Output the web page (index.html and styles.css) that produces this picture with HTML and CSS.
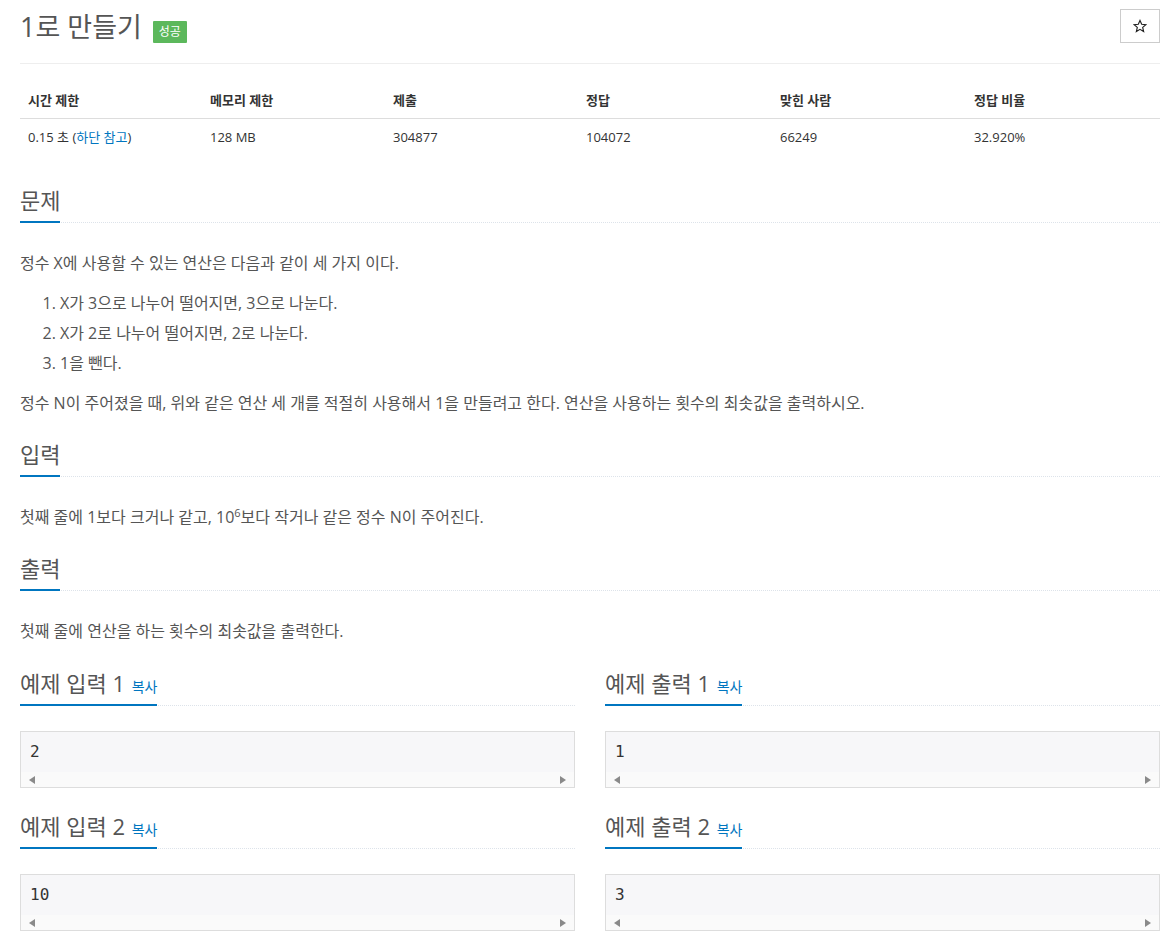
FILE: index.html
```html
<!DOCTYPE html>
<html lang="ko">
<head>
<meta charset="utf-8">
<title>1로 만들기</title>
<link rel="stylesheet" href="styles.css">
</head>
<body>
<div class="page">
  <div class="page-header">
    <h1 class="title">
      <span class="title-text">1로 만들기</span>
      <span class="badge">성공</span>
    </h1>
    <button class="star-btn" type="button" aria-label="즐겨찾기">
      <svg width="14" height="14" viewBox="0 0 24 24"><path d="M12 2.5l2.9 6.6 7.1.6-5.4 4.7 1.6 7-6.2-3.7-6.2 3.7 1.6-7L2 9.7l7.1-.6z" fill="none" stroke="#222" stroke-width="2" stroke-linejoin="miter"/></svg>
    </button>
  </div>

  <table class="info">
    <thead>
      <tr>
        <th class="c1">시간 제한</th>
        <th class="c2">메모리 제한</th>
        <th class="c3">제출</th>
        <th class="c4">정답</th>
        <th class="c5">맞힌 사람</th>
        <th class="c6">정답 비율</th>
      </tr>
    </thead>
    <tbody>
      <tr>
        <td>0.15 초 (<a class="link" href="#">하단 참고</a>)</td>
        <td>128 MB</td>
        <td>304877</td>
        <td>104072</td>
        <td>66249</td>
        <td>32.920%</td>
      </tr>
    </tbody>
  </table>

  <section class="section">
    <div class="headline"><h2>문제</h2></div>
    <div class="text">
      <p>정수 X에 사용할 수 있는 연산은 다음과 같이 세 가지 이다.</p>
      <ol>
        <li>X가 3으로 나누어 떨어지면, 3으로 나눈다.</li>
        <li>X가 2로 나누어 떨어지면, 2로 나눈다.</li>
        <li>1을 뺀다.</li>
      </ol>
      <p>정수 N이 주어졌을 때, 위와 같은 연산 세 개를 적절히 사용해서 1을 만들려고 한다. 연산을 사용하는 횟수의 최솟값을 출력하시오.</p>
    </div>
  </section>

  <section class="section">
    <div class="headline"><h2>입력</h2></div>
    <div class="text">
      <p>첫째 줄에 1보다 크거나 같고, 10<sup>6</sup>보다 작거나 같은 정수 N이 주어진다.</p>
    </div>
  </section>

  <section class="section">
    <div class="headline"><h2>출력</h2></div>
    <div class="text">
      <p>첫째 줄에 연산을 하는 횟수의 최솟값을 출력한다.</p>
    </div>
  </section>

  <div class="samples">
    <div class="sample">
      <div class="headline"><h2>예제 입력 1 <a class="copy" href="#">복사</a></h2></div>
      <div class="pre"><div class="pre-text">2</div><div class="hscroll"><span class="arr left"></span><span class="arr right"></span></div></div>
    </div>
    <div class="sample">
      <div class="headline"><h2>예제 출력 1 <a class="copy" href="#">복사</a></h2></div>
      <div class="pre"><div class="pre-text">1</div><div class="hscroll"><span class="arr left"></span><span class="arr right"></span></div></div>
    </div>
    <div class="sample">
      <div class="headline"><h2>예제 입력 2 <a class="copy" href="#">복사</a></h2></div>
      <div class="pre"><div class="pre-text">10</div><div class="hscroll"><span class="arr left"></span><span class="arr right"></span></div></div>
    </div>
    <div class="sample">
      <div class="headline"><h2>예제 출력 2 <a class="copy" href="#">복사</a></h2></div>
      <div class="pre"><div class="pre-text">3</div><div class="hscroll"><span class="arr left"></span><span class="arr right"></span></div></div>
    </div>
  </div>
</div>
</body>
</html>
```

FILE: styles.css
```css
html, body {
  margin: 0;
  padding: 0;
  background: #fff;
}

body {
  font-family: "Open Sans", "Noto Sans CJK KR", sans-serif;
  color: #555;
  font-size: 14px;
}

.page {
  padding: 0 8px 0 20px;
}

.page-header {
  display: flex;
  justify-content: space-between;
  align-items: flex-start;
  padding-top: 9px;
  padding-bottom: 19px;
  border-bottom: 1px solid #eee;
}

.title {
  margin: 0;
  display: flex;
  align-items: center;
  font-weight: 400;
  font-size: 27px;
  line-height: 35px;
  color: #555;
}

.badge {
  display: inline-block;
  margin-left: 11px;
  margin-top: 10px;
  background: #5cb85c;
  color: #fff;
  font-size: 12px;
  line-height: 22px;
  height: 22px;
  padding: 0 6px;
  border-radius: 1px;
}

.star-btn {
  width: 40px;
  height: 34px;
  margin: 0;
  padding: 0;
  background: #fff;
  border: 1px solid #ccc;
  border-radius: 0;
  display: flex;
  align-items: center;
  justify-content: center;
}

.info {
  width: 100%;
  border-collapse: collapse;
  margin-top: 18px;
  margin-bottom: 32px;
  font-size: 13px;
  color: #333;
}

.info th,
.info td {
  text-align: left;
  padding: 8px;
  line-height: 20px;
  vertical-align: top;
}

.info th {
  font-weight: 700;
  border-bottom: 1px solid #ddd;
}

.c1 { width: 166px; }
.c2 { width: 167px; }
.c3 { width: 177px; }
.c4 { width: 178px; }
.c5 { width: 178px; }

.link, .copy {
  color: #0076c0;
  text-decoration: none;
}

.section {
  display: flow-root;
  margin-bottom: 13px;
}

.headline {
  border-bottom: 1px dotted #dde3ea;
  margin-bottom: 25px;
}

.headline h2 {
  display: inline-block;
  margin: 0 0 -1px;
  padding-bottom: 8px;
  border-bottom: 2px solid #0076c0;
  font-size: 22px;
  line-height: 26px;
  height: 26px;
  font-weight: 400;
  color: #555;
}

.text {
  font-size: 16px;
  line-height: 30px;
}

.text p {
  margin: 0 0 10px;
}

.text ol {
  margin: 0 0 10px;
  padding-left: 40px;
}

.text sup {
  font-size: 11px;
  line-height: 0;
  vertical-align: 6px;
}

.copy {
  font-size: 14px;
  line-height: 1;
  margin-left: 1px;
}

.samples {
  display: grid;
  grid-template-columns: 1fr 1fr;
  column-gap: 30px;
  margin-top: 14px;
}

.sample {
  margin-bottom: 25px;
}

.pre {
  border: 1px solid #ddd;
  background: #f7f7f9;
}

.pre-text {
  font-family: "DejaVu Sans Mono", monospace;
  font-size: 16px;
  line-height: 22px;
  color: #333;
  padding: 9px 9px 9px;
}

.hscroll {
  height: 15px;
  background: #fafafa;
  position: relative;
}

.arr {
  position: absolute;
  top: 4px;
  width: 0;
  height: 0;
  border-top: 4px solid transparent;
  border-bottom: 4px solid transparent;
}

.arr.left {
  left: 8px;
  border-right: 6px solid #8a8a8a;
}

.arr.right {
  right: 8px;
  border-left: 6px solid #8a8a8a;
}
```
